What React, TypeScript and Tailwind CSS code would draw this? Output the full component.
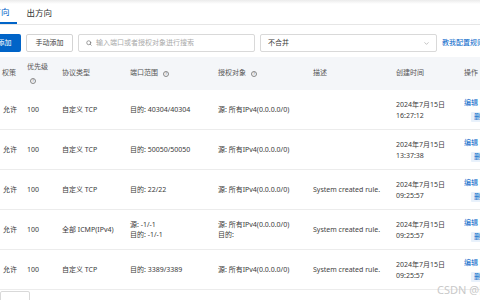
import { ChevronDown, Search } from 'lucide-react';

interface Rule {
  id: number;
  proto: string;
  ports: string[];
  targets: string[];
  desc: string;
  time: string;
}

const rules: Rule[] = [
  { id: 1, proto: '自定义 TCP', ports: ['目的: 40304/40304'], targets: ['源: 所有IPv4(0.0.0.0/0)'], desc: '', time: '16:27:12' },
  { id: 2, proto: '自定义 TCP', ports: ['目的: 50050/50050'], targets: ['源: 所有IPv4(0.0.0.0/0)'], desc: '', time: '13:37:38' },
  { id: 3, proto: '自定义 TCP', ports: ['目的: 22/22'], targets: ['源: 所有IPv4(0.0.0.0/0)'], desc: 'System created rule.', time: '09:25:57' },
  { id: 4, proto: '全部 ICMP(IPv4)', ports: ['源: -1/-1', '目的: -1/-1'], targets: ['源: 所有IPv4(0.0.0.0/0)', '目的:'], desc: 'System created rule.', time: '09:25:57' },
  { id: 5, proto: '自定义 TCP', ports: ['目的: 3389/3389'], targets: ['源: 所有IPv4(0.0.0.0/0)'], desc: 'System created rule.', time: '09:25:57' },
];

const cols = 'grid grid-cols-[27px_35px_68px_88px_95px_83px_68px_60px]';

function Help() {
  return (
    <span className="inline-flex h-[6px] w-[6px] items-center justify-center rounded-full border border-[#888] text-[4px] leading-none text-[#777]">
      ?
    </span>
  );
}

export default function App() {
  return (
    <div className="relative h-[300px] w-[480px] overflow-hidden bg-white font-['Noto_Sans','Noto_Sans_CJK_SC',sans-serif] text-[7px] text-[#3a3a3a]">
      {/* Tabs */}
      <div className="flex h-[25px] gap-[3px] border-b border-[#e6e6e6] bg-[linear-gradient(#ebebeb,#fff_4px)]">
        <div className="-ml-[23px] flex h-[24px] items-center border-b-2 border-[#0064c8] px-[7px] pt-[2px] text-[8.5px] text-[#0064c8]">
          入方向
        </div>
        <div className="flex h-[24px] items-center px-[7px] pt-[2px] text-[8.5px] text-[#333]">出方向</div>
      </div>

      {/* Toolbar */}
      <div className="-ml-[26px] mt-[9px] flex h-[18px] items-center gap-[5px]">
        <button className="h-[18px] w-[47px] shrink-0 rounded-[2px] bg-[#0064c8] text-white">快速添加</button>
        <button className="h-[18px] w-[47px] shrink-0 rounded-[2px] border border-[#d4d4d4] bg-white">手动添加</button>
        <div className="flex h-[18px] w-[177px] shrink-0 items-center gap-[4px] rounded-[2px] border border-[#d9d9d9] px-[7px] text-[#aaa]">
          <Search size={6} strokeWidth={2.5} className="text-[#666]" />
          <span>输入端口或者授权对象进行搜索</span>
        </div>
        <div className="flex h-[18px] w-[177px] shrink-0 items-center justify-between rounded-[2px] border border-[#d9d9d9] pl-[7px] pr-[6px]">
          <span>不合并</span>
          <ChevronDown size={7} className="text-[#999]" />
        </div>
        <span className="shrink-0 text-[#0064c8]">教我配置规则</span>
      </div>

      {/* Table */}
      <div className="mt-[5px] w-[540px]">
        <div className={`${cols} h-[33px] items-center bg-[#f4f6f9] text-[#555]`}>
          <div className="pl-[2px]">权策</div>
          <div className="flex flex-col items-start gap-[2px]">
            <span>优先级</span>
            <span className="pl-[3px]"><Help /></span>
          </div>
          <div>协议类型</div>
          <div className="flex items-center gap-[5px]">端口范围 <Help /></div>
          <div className="flex items-center gap-[5px]">授权对象 <Help /></div>
          <div>描述</div>
          <div>创建时间</div>
          <div>操作</div>
        </div>

        {rules.map((r) => (
          <div key={r.id} className={`${cols} h-[40px] items-center border-b border-[#ececec] pt-[1px]`}>
            <div className="-ml-[5px] flex items-center gap-[3px]">
              <span className="h-[5px] w-[5px] rounded-full bg-[#a0a0a0]" />
              <span>允许</span>
            </div>
            <div>100</div>
            <div>{r.proto}</div>
            <div className="flex flex-col leading-[10px]">
              {r.ports.map((p) => <span key={p}>{p}</span>)}
            </div>
            <div className="flex flex-col leading-[10px]">
              {r.targets.map((t) => <span key={t}>{t}</span>)}
            </div>
            <div className="text-[#444]">{r.desc}</div>
            <div className="flex flex-col leading-[11px]">
              <span>2024年7月15日</span>
              <span>{r.time}</span>
            </div>
            <div className="flex flex-col items-start gap-[3px]">
              <span className="text-[#0064c8]">编辑</span>
              <span className="ml-[7px] rounded-[1px] bg-[#e8f1fb] px-[3px] text-[#0064c8]">删除</span>
            </div>
          </div>
        ))}

        <div className="mt-[1px] h-[20px] w-[30px] rounded-[2px] border border-[#d9d9d9]" />
      </div>

      <div className="absolute left-[437px] top-[282px] whitespace-nowrap text-[11px] text-[#c9c9c9]">CSDN @网络小白</div>
    </div>
  );
}
